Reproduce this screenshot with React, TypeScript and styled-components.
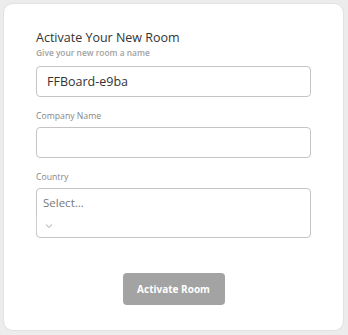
import React from "react";
import styled, { createGlobalStyle } from "styled-components";

const Global = createGlobalStyle`
  html, body { margin: 0; padding: 0; background: #ececec; }
  body { font-family: "Open Sans", "Liberation Sans", sans-serif; }
  * { box-sizing: border-box; }
`;

const Card = styled.div`
  margin: 3px;
  width: 341px;
  height: 328px;
  background: #fff;
  border: 1px solid #e2e2e2;
  border-radius: 10px;
  padding: 25px 32px 25px 32px;
  display: flex;
  flex-direction: column;
`;

const Title = styled.h2`
  margin: 0;
  font-size: 12.5px;
  line-height: 18px;
  font-weight: 400;
  color: #333;
`;

const Hint = styled.div`
  font-size: 8.4px;
  line-height: 12px;
  font-weight: 600;
  color: #a2a2a2;
  margin-bottom: 7px;
`;

const Label = styled.div<{ $top: number }>`
  font-size: 8.7px;
  line-height: 12px;
  color: #868686;
  margin-top: ${(p) => p.$top}px;
  margin-bottom: 5px;
`;

const Input = styled.input`
  display: block;
  width: 100%;
  height: 31px;
  border: 1px solid #c4c4c4;
  border-radius: 4px;
  padding: 0 10px;
  font-family: inherit;
  font-size: 12.5px;
  color: #333;
  outline: none;
  background: #fff;
`;

const SelectBox = styled.div`
  position: relative;
  height: 50px;
  border: 1px solid #c4c4c4;
  border-radius: 4px;
  display: flex;
  flex-direction: column;
`;

const Placeholder = styled.div`
  font-size: 11.5px;
  line-height: 17px;
  color: #777;
  padding: 5px 6px 0;
`;

const Indicators = styled.div`
  display: flex;
  align-items: center;
  height: 26px;
  padding-top: 4px;
`;

const Separator = styled.span`
  width: 1px;
  align-self: stretch;
  margin: 0 0 4px -1px;
  background: #cfcfcf;
`;

const Chevron = styled.span`
  display: flex;
  padding: 0 8px 0 7px;
  color: #c8c8c8;
`;

const ButtonRow = styled.div`
  margin-top: auto;
  display: flex;
  justify-content: center;
`;

const Button = styled.button`
  width: 102px;
  height: 32px;
  border: none;
  border-radius: 4px;
  background: #a3a3a3;
  color: #fff;
  font-family: inherit;
  font-size: 10px;
  font-weight: 700;
  cursor: default;
`;

export default function App() {
  return (
    <>
      <Global />
      <Card>
        <Title>Activate Your New Room</Title>
        <Hint>Give your new room a name</Hint>
        <Input defaultValue="FFBoard-e9ba" />
        <Label $top={13}>Company Name</Label>
        <Input />
        <Label $top={13}>Country</Label>
        <SelectBox>
          <Placeholder>Select...</Placeholder>
          <Indicators>
            <Separator />
            <Chevron>
              <svg width="10" height="10" viewBox="0 0 10 10" fill="none">
                <path d="M2 3.5 L5 6.5 L8 3.5" stroke="currentColor" strokeWidth="1.1" />
              </svg>
            </Chevron>
          </Indicators>
        </SelectBox>
        <ButtonRow>
          <Button>Activate Room</Button>
        </ButtonRow>
      </Card>
    </>
  );
}
